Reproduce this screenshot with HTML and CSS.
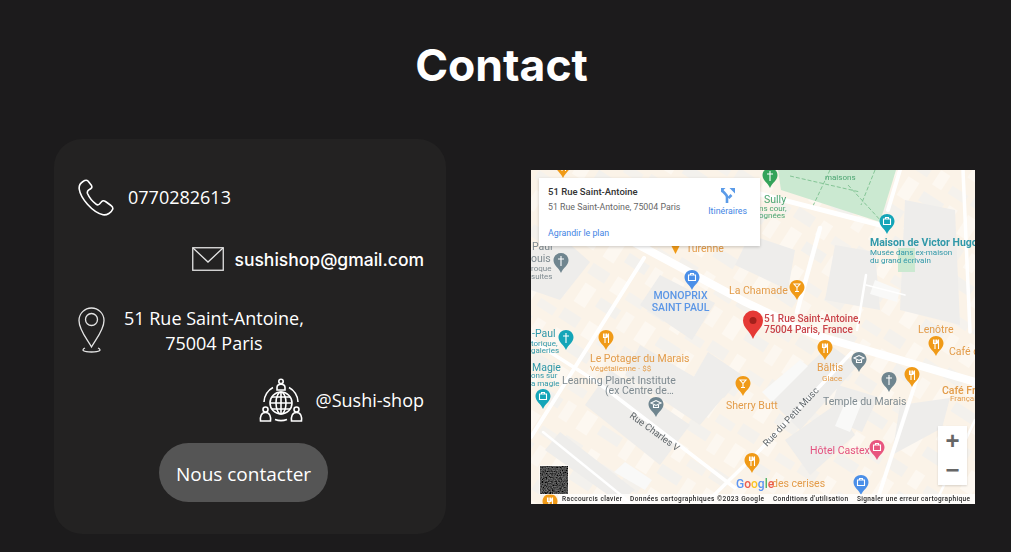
FILE: index.html
```html
<!DOCTYPE html>
<html lang="fr">
<head>
    <meta charset="UTF-8">
    <meta name="viewport" content="width=device-width, initial-scale=1.0">
    <title>Contact</title>
    <link rel="stylesheet" href="styles.css">
</head>
<body>
    <h1>Contact</h1>

    <div class="content">
        <div class="card">
            <div class="row row-phone">
                <svg class="icon" width="36" height="37" viewBox="0 0 36 37"><path d="M5 2.5C2.5 4 .8 6.5 1.2 10 2.5 19 14 33 25 35.8 29 36.5 33.5 33.5 34.8 30 35 28.5 34.5 27.5 33 26.5L27.5 22.5C26 21.5 24.5 21.5 23.5 22.8L21.5 25C20.5 26 19 26 18 25.2 14 22 11 18 9.5 14.5 9 13 9.5 12 10.5 11.2L13 9.5C14 8.7 14 7.5 13.5 6.5L10 2C8.8.8 6.8 1.2 5 2.5Z"/></svg>
                <span>0770282613</span>
            </div>
            <div class="row row-mail">
                <svg class="icon thin" width="32" height="24" viewBox="0 0 32 24"><rect x=".75" y=".75" width="30.5" height="22.5"/><path d="M1 1 16 15 31 1"/></svg>
                <span class="mail">sushishop@gmail.com</span>
            </div>
            <div class="row row-address">
                <svg class="icon thin" width="27" height="46" viewBox="0 0 27 46"><path d="M13.5 40C9 32 1 23 1 13.5A12.5 12.5 0 0 1 26 13.5C26 23 18 32 13.5 40Z"/><circle cx="13.5" cy="12.5" r="6"/><path d="M7 41C3 43 5 45 13.5 45S24 43 20 41"/></svg>
                <span class="address">51 Rue Saint-Antoine,<br>75004 Paris</span>
            </div>
            <div class="row row-social">
                <svg class="icon" width="44" height="44" viewBox="0 0 44 44">
                    <circle cx="22" cy="3.4" r="2.2"/><path d="M18 12V9.500C18 7.300 19.800 6.200 22 6.200S26 7.300 26 9.500V12Z"/>
                    <circle cx="6.500" cy="31.500" r="2.500"/><path d="M1.500 43C1 39 2 34.500 6.500 34.500S12 39 11.500 43Z"/>
                    <circle cx="37.500" cy="31.500" r="2.500"/><path d="M32.500 43C32 39 33 34.500 37.500 34.500S43 39 42.500 43Z"/>
                    <g class="globe">
                        <circle cx="22" cy="25" r="11"/><ellipse cx="22" cy="25" rx="5" ry="11"/><path d="M22 14V36M11 25H33M13 19H31M13 31H31"/>
                    </g>
                    <path d="M5 24C5 18 9 12 14 9.500M39 24C39 18 35 12 30 9.500M16 41.500C20 43 24 43 28 41.500"/>
                </svg>
                <span>@Sushi-shop</span>
            </div>
            <a class="btn" href="#">Nous contacter</a>
        </div>

        <div class="map">
            <svg class="map-canvas" width="444" height="334" viewBox="531 170 444 334">
                <defs>
                    <path id="pin" d="M0-20C-4.200-20-7.500-16.800-7.500-12.700-7.500-7.500-2-5 0 0 2-5 7.500-7.500 7.500-12.700 7.500-16.800 4.200-20 0-20Z"/>
                    <g id="fork" class="glyph"><path d="M-2.500-16.500V-12.500H-1V-7M-1-16.500V-12.500M.5-16.500V-12.500H-1M2.500-16.500V-7M2.500-16.500C1.500-15 1.500-13 2.500-12"/></g>
                    <g id="glass" class="glyph"><path d="M-3-16H3L0-12.500ZM0-12.500V-8.500M-2-8.500H2"/></g>
                    <g id="cross" class="glyph"><path d="M0-17V-7M-3-14H3"/></g>
                    <g id="cap" class="glyph"><path d="M-5-14 0-16.500 5-14 0-11.500ZM-2.500-12V-9.500H2.500V-12"/></g>
                    <g id="case" class="glyph"><path d="M-3.500-15H3.500V-9.500H-3.500ZM-1.500-15V-16.500H1.500V-15"/></g>
                    <pattern id="houses" width="71" height="53" patternUnits="userSpaceOnUse" patternTransform="rotate(33)">
                        <rect x="2" y="3" width="20" height="12" fill="#f4f1ec"/>
                        <rect x="30" y="1" width="11" height="17" fill="#fdf8f1"/>
                        <rect x="48" y="8" width="19" height="9" fill="#f5f2ed"/>
                        <rect x="6" y="24" width="13" height="22" fill="#fdf8f1"/>
                        <rect x="27" y="28" width="24" height="11" fill="#f3f1ed"/>
                        <rect x="56" y="26" width="10" height="20" fill="#fcf7f0"/>
                    </pattern>
                    <filter id="grain" x="0" y="0" width="100%" height="100%"><feTurbulence type="fractalNoise" baseFrequency="0.8" numOctaves="2"/><feColorMatrix type="matrix" values=".35 0 0 0 -.1 .35 0 0 0 -.1 .35 0 0 0 -.1 0 0 0 0 1"/></filter>
                </defs>

                <rect x="531" y="170" width="444" height="334" fill="#fbf3e8"/>
                <rect x="531" y="170" width="444" height="334" fill="url(#houses)"/>

                <!-- blocks -->
                <g fill="#eeedeb">
                    <path d="M531 250 565 240 590 262 560 300 531 290Z"/>
                    <path d="M660 275 715 303 692 340 640 305Z"/>
                    <path d="M750 235 795 250 788 290 735 265Z"/>
                    <path d="M835 245 875 252 880 310 825 300Z"/>
                    <path d="M905 200 955 210 960 325 900 310Z"/>
                    <path d="M610 370 690 425 660 465 585 405Z"/>
                    <path d="M640 345 725 395 700 425 625 375Z"/>
                    <path d="M560 432 635 490 618 502 545 450Z"/>
                    <path d="M770 400 830 345 858 365 800 430Z"/>
                    <path d="M785 440 835 405 855 435 810 475Z"/>
                    <path d="M900 405 950 398 942 428 892 455Z"/>
                    <path d="M838 385 878 397 862 432 828 418Z"/>
                    <path d="M708 352 742 375 724 398 692 380Z"/>
                </g>
                <g fill="#f9f9f8">
                    <path d="M762 392 800 360 808 366 772 402Z"/>
                    <path d="M847 398 862 402 850 432 835 426Z"/>
                    <path d="M875 280 900 290 897 302 870 294Z"/>
                    <path d="M625 462 652 480 645 490 614 472Z"/>
                </g>

                <!-- park -->
                <path d="M778 170H896L880 222 781 190Z" fill="#cbe9d1"/>
                <path d="M790 176 860 192M830 170 812 208M875 170 861 205M848 185 882 222" fill="none" stroke="#84c596" stroke-width="1" stroke-dasharray="4 2"/>
                <path d="M898 248H915V272H898Z" fill="#cbe9d1"/>

                <!-- streets -->
                <g fill="none" stroke="#fff" stroke-linecap="round">
                    <path d="M622 236 745 302 815 335 975 382" stroke-width="8"/>
                    <path d="M756 193 884 226" stroke-width="5"/>
                    <path d="M531 340 597 382 735 488" stroke-width="3.500"/>
                    <path d="M543 432 632 504" stroke-width="2.500"/>
                    <path d="M531 437 644 258" stroke-width="4"/>
                    <path d="M705 504 760 450 852 352" stroke-width="3.500"/>
                    <path d="M900 170 888 210" stroke-width="4"/>
                    <path d="M820 228 797 312" stroke-width="4.500"/>
                    <path d="M918 375 876 504" stroke-width="4"/>
                    <path d="M963 170 970 332" stroke-width="3.500"/>
                    <path d="M866 275 857 330" stroke-width="2.500"/>
                    <path d="M866 285 905 295" stroke-width="1.500"/>
                    <path d="M975 420 935 504" stroke-width="2.500"/>
                </g>

                <!-- pins -->
                <use href="#pin" x="563" y="178" fill="#f09a17"/><use href="#fork" x="563" y="178"/>
                <use href="#pin" x="770" y="188" fill="#34a35a"/><use href="#cross" x="770" y="188"/>
                <use href="#pin" x="887" y="234" fill="#14a5b8"/><use href="#case" x="887" y="234"/>
                <use href="#pin" x="561" y="273" fill="#6f858f"/><use href="#cross" x="561" y="273"/>
                <use href="#pin" x="692" y="290" fill="#4b8fe8"/><use href="#case" x="692" y="290"/>
                <use href="#pin" x="797" y="300" fill="#f09a17"/><use href="#glass" x="797" y="300"/>
                <use href="#pin" x="566" y="350" fill="#14a5b8"/><use href="#cross" x="566" y="350"/>
                <use href="#pin" x="606" y="350" fill="#f09a17"/><use href="#fork" x="606" y="350"/>
                <use href="#pin" x="825" y="360" fill="#f09a17"/><use href="#fork" x="825" y="360"/>
                <use href="#pin" x="859" y="372" fill="#6f858f"/><use href="#cap" x="859" y="372"/>
                <use href="#pin" x="889" y="392" fill="#6f858f"/><use href="#cross" x="889" y="392"/>
                <use href="#pin" x="912" y="387" fill="#f09a17"/><use href="#fork" x="912" y="387"/>
                <use href="#pin" x="936" y="356" fill="#f09a17"/><use href="#fork" x="936" y="356"/>
                <use href="#pin" x="743" y="396" fill="#f09a17"/><use href="#glass" x="743" y="396"/>
                <use href="#pin" x="543" y="409" fill="#14a5b8"/><use href="#case" x="543" y="409"/>
                <use href="#pin" x="656" y="417" fill="#6f858f"/><use href="#cap" x="656" y="417"/>
                <use href="#pin" x="877" y="460" fill="#e8557f"/><use href="#case" x="877" y="460"/>
                <use href="#pin" x="861" y="495" fill="#4b8fe8"/><use href="#case" x="861" y="495"/>
                <use href="#pin" x="752" y="473" fill="#f09a17"/><use href="#fork" x="752" y="473"/>
                <use href="#pin" x="550" y="514" fill="#f09a17"/><use href="#fork" x="550" y="514"/>
                <path d="M671 245H680L675.500 254Z" fill="#f09a17"/>

                <!-- main marker -->
                <path d="M753 339C750 331 743 328 743 320.500A10 10 0 0 1 763 320.500C763 328 756 331 753 339Z" fill="#e53935"/>
                <circle cx="753" cy="320.500" r="3.500" fill="#a3201b"/>

                <!-- labels -->
                <g class="lbl orange">
                    <text x="686" y="252">Turenne</text>
                    <text x="729" y="294">La Chamade</text>
                    <text x="918" y="333">Lenôtre</text>
                    <text x="949" y="355">Café d</text>
                    <text x="942" y="394" class="med">Café Fr</text>
                    <text x="950" y="401" class="tiny">Français</text>
                    <text x="817" y="371">Bâltis</text>
                    <text x="822" y="381" class="tiny">Glace</text>
                    <text x="590" y="362">Le Potager du Marais</text>
                    <text x="590" y="371" class="tiny">Végétalienne · $$</text>
                    <text x="726" y="409">Sherry Butt</text>
                    <text x="772" y="487">des cerises</text>
                </g>
                <g class="lbl blue">
                    <text x="680.500" y="299" text-anchor="middle">MONOPRIX</text>
                    <text x="680.500" y="311" text-anchor="middle">SAINT PAUL</text>
                </g>
                <g class="lbl teal">
                    <text x="870" y="246" class="strong">Maison de Victor Hugo</text>
                    <text x="870" y="255" class="tiny">Musée dans ex-maison</text>
                    <text x="870" y="263" class="tiny">du grand écrivain</text>
                    <text x="532" y="371">Magie</text>
                    <text x="531" y="378" class="tiny">ons sur</text>
                    <text x="531" y="386" class="tiny">a magie</text>
                    <text x="532" y="337">-Paul</text>
                    <text x="531" y="346" class="tiny">torique,</text>
                    <text x="531" y="353" class="tiny">galeries</text>
                </g>
                <g class="lbl green">
                    <text x="764" y="203">Sully</text>
                    <text x="759" y="211" class="tiny">ns cour,</text>
                    <text x="759" y="218" class="tiny">ognées</text>
                    <text x="825" y="180" class="tiny">maisons</text>
                </g>
                <g class="lbl gray">
                    <text x="532" y="250">Paul</text>
                    <text x="531" y="262">ouis</text>
                    <text x="531" y="271" class="tiny">roque</text>
                    <text x="531" y="279" class="tiny">suites</text>
                    <text x="562" y="384">Learning Planet Institute</text>
                    <text x="605" y="394">(ex Centre de…</text>
                    <text x="823" y="405">Temple du Marais</text>
                </g>
                <g class="lbl road">
                    <text transform="translate(629 417) rotate(36)">Rue Charles V</text>
                    <text transform="translate(767 447) rotate(-47)">Rue du Petit Musc</text>
                </g>
                <g class="lbl red">
                    <text x="764" y="322">51 Rue Saint-Antoine,</text>
                    <text x="764" y="333">75004 Paris, France</text>
                </g>
                <text x="810" y="454" class="lbl pink">Hôtel Castex</text>

                <g class="logo">
                    <text x="736" y="488"><tspan fill="#4285f4">G</tspan><tspan fill="#ea4335">o</tspan><tspan fill="#fbbc05">o</tspan><tspan fill="#4285f4">g</tspan><tspan fill="#34a853">l</tspan><tspan fill="#ea4335">e</tspan></text>
                </g>

                <!-- satellite thumbnail -->
                <rect x="539.500" y="465.500" width="29" height="29" fill="#fff"/>
                <rect x="540.500" y="466.500" width="27" height="27" filter="url(#grain)"/>

                <!-- footer strip -->
                <rect x="558" y="494" width="417" height="10" fill="#fff" opacity=".75"/>
                <g class="legal">
                    <text x="562" y="501" textLength="60">Raccourcis clavier</text>
                    <text x="630" y="501" textLength="134">Données cartographiques ©2023 Google</text>
                    <text x="773" y="501" textLength="75">Conditions d'utilisation</text>
                    <text x="857" y="501" textLength="113">Signaler une erreur cartographique</text>
                </g>
            </svg>

            <div class="map-card">
                <div class="map-card-info">
                    <div class="place">51 Rue Saint-Antoine</div>
                    <div class="place-sub">51 Rue Saint-Antoine, 75004 Paris</div>
                    <a class="map-link" href="#">Agrandir le plan</a>
                </div>
                <a class="directions" href="#">
                    <svg width="14" height="15" viewBox="0 0 14 15"><path d="M6 15V9C6 7.500 5 6.500 3.500 5L1 2.500M10.500 7 7.500 10" fill="none" stroke="#5b9be8" stroke-width="2.600"/><path d="M0 0H4.500L0 4.500ZM14 0V5.500L8.500 0Z" fill="#5b9be8"/></svg>
                    <span>Itinéraires</span>
                </a>
            </div>

            <div class="map-zoom">
                <span class="zoom-btn">+</span>
                <span class="zoom-btn">−</span>
            </div>
        </div>
    </div>
</body>
</html>
```

FILE: styles.css
```css
* {
    margin: 0;
    padding: 0;
    box-sizing: border-box;
}

body {
    font-family: 'Open Sans', sans-serif;
    background: #1c1b1c;
    color: #fff;
    height: 552px;
    overflow: hidden;
}

h1 {
    font-family: 'Inter', 'Liberation Sans', sans-serif;
    font-size: 44.500px;
    font-weight: 700;
    line-height: 52px;
    text-align: center;
    padding: 39px 8px 0 0;
}

.content {
    display: flex;
    align-items: flex-start;
    gap: 85px;
    padding: 48px 0 0 54px;
}

/* Contact card */
.card {
    width: 392px;
    height: 395px;
    display: flex;
    flex-direction: column;
    padding: 40px 22px 0 24px;
    background: #232222;
    border-radius: 28px;
    font-size: 18px;
    line-height: 25px;
}

.row {
    display: flex;
    align-items: center;
}

.row-phone {
    gap: 14px;
}

.row-mail {
    justify-content: flex-end;
    gap: 10px;
    height: 25px;
    margin-top: 30px;
}

.row-address {
    gap: 19px;
    margin-top: 36px;
    margin-bottom: 25px;
    height: 46px;
    align-items: flex-start;
}

.row-social {
    justify-content: flex-end;
    gap: 13px;
}

.icon {
    flex: none;
    fill: none;
    stroke: #fff;
    stroke-width: 1.600;
}

.icon.thin {
    stroke: #e4e4e4;
    stroke-width: 1.300;
}

.mail {
    font-family: 'Inter', sans-serif;
    font-size: 17.500px;
    font-weight: 500;
    margin-top: 2px;
}

.address {
    text-align: center;
    margin-top: -1px;
}

.btn {
    align-self: center;
    margin: 21px 15px 0 0;
    padding: 3px 17px 0;
    height: 59px;
    display: flex;
    align-items: center;
    background: #555;
    border-radius: 30px;
    color: #fff;
    font-size: 19px;
    text-decoration: none;
}

/* Map */
.map {
    position: relative;
    width: 444px;
    height: 334px;
    margin-top: 31px;
    overflow: hidden;
}

.map-canvas {
    display: block;
    filter: blur(0.5px);
}

.lbl {
    font-family: 'Roboto', sans-serif;
    font-size: 10.500px;
}

.lbl .tiny {
    font-size: 8px;
}

.lbl .strong {
    font-weight: 700;
    font-size: 10.500px;
}

.lbl .med {
    font-weight: 500;
}

.orange { fill: #e39c4a; }
.blue { fill: #5b96e6; font-weight: 500; }
.teal { fill: #3098a9; }
.green { fill: #4ba571; }
.gray { fill: #7f8b91; }
.road { fill: #5f666a; font-size: 9.500px; }
.red { fill: #c9444a; font-weight: 500; font-size: 10px; }
.pink { fill: #e4527f; }

.glyph {
    fill: none;
    stroke: #fff;
    stroke-width: 1.100;
}

.logo {
    font-family: 'Roboto', sans-serif;
    font-size: 12px;
    font-weight: 500;
    opacity: 0.85;
}

.legal {
    font-family: 'Roboto', sans-serif;
    font-size: 6.500px;
    font-weight: 500;
    fill: #222;
}

.map-card {
    position: absolute;
    left: 8px;
    top: 8px;
    width: 221px;
    height: 68px;
    display: flex;
    justify-content: space-between;
    padding: 8px 13px 0 9px;
    background: #fff;
    box-shadow: 0 1px 3px rgba(0, 0, 0, 0.2);
    font-family: 'Roboto', sans-serif;
}

.place {
    font-size: 9.500px;
    font-weight: 500;
    line-height: 11px;
    color: #333;
}

.place-sub {
    font-size: 8.800px;
    line-height: 11px;
    margin-top: 5px;
    color: #666;
}

.map-link {
    display: block;
    margin-top: 15px;
    font-size: 8.800px;
    line-height: 11px;
    color: #3f85e4;
    text-decoration: none;
}

.directions {
    display: flex;
    flex-direction: column;
    align-items: center;
    gap: 3px;
    padding-top: 2px;
    font-size: 8.800px;
    line-height: 11px;
    color: #3f85e4;
    text-decoration: none;
}

.map-zoom {
    position: absolute;
    left: 407px;
    top: 256px;
    width: 29px;
    height: 59px;
    display: flex;
    flex-direction: column;
    background: #fff;
    box-shadow: 0 1px 2px rgba(0, 0, 0, 0.15);
}

.zoom-btn {
    flex: 1;
    display: flex;
    align-items: center;
    justify-content: center;
    font-family: 'Liberation Sans', Arial, sans-serif;
    font-size: 24px;
    font-weight: 700;
    color: #666;
}
```
